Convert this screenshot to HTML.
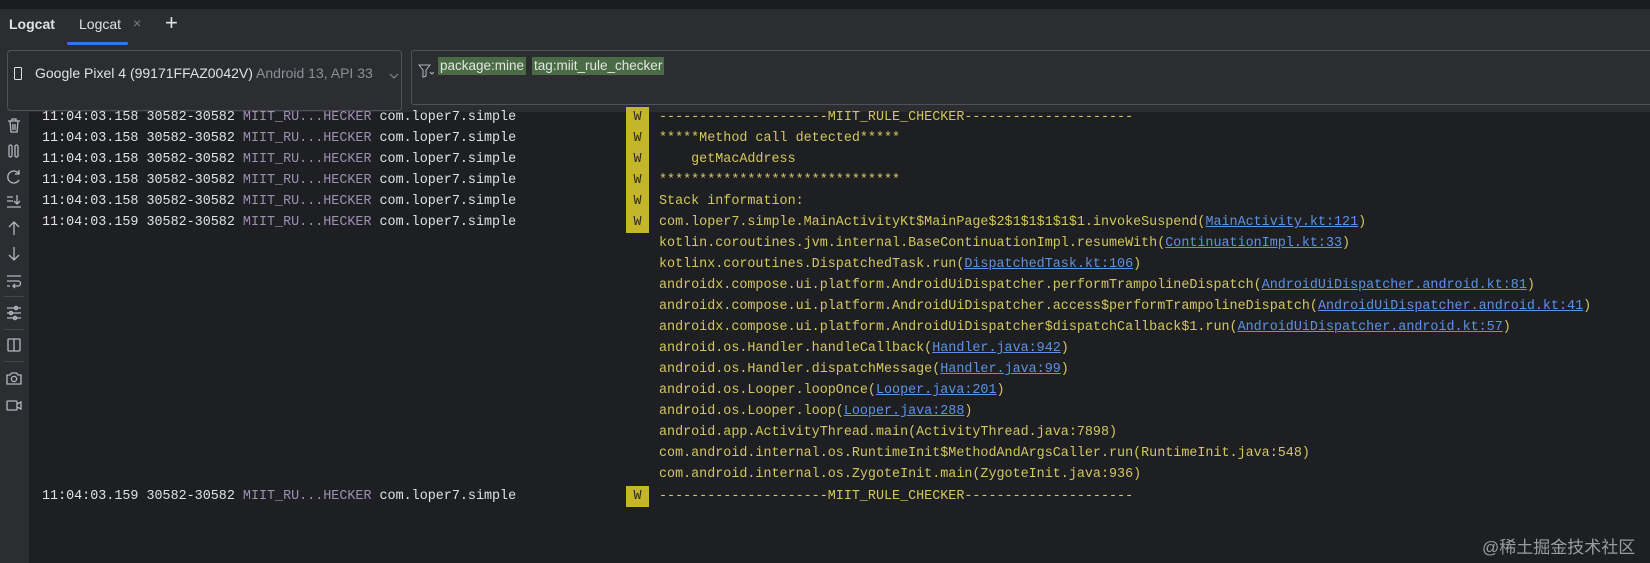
<!DOCTYPE html>
<html><head><meta charset="utf-8"><style>
body{margin:0;width:1650px;height:563px;background:#1e1f22;overflow:hidden;position:relative;font-family:"Liberation Sans",sans-serif}
.top{position:absolute;left:0;top:0;width:1650px;height:9px;background:#1a1b1d}
.tabbar{position:absolute;left:0;top:9px;width:1650px;height:37px;background:#2b2d30}
.t{position:absolute;color:#dfe1e5;font-size:14px}
.ul{position:absolute;left:67px;top:42px;width:61px;height:3px;background:#3574f0;border-radius:2px}
.band{position:absolute;left:0;top:46px;width:1650px;height:66px;background:#2b2d30}
.dev{position:absolute;left:7px;top:50px;width:395px;height:61px;border:1px solid #4e5157;border-radius:4px;box-sizing:border-box;background:#2b2d30}
.flt{position:absolute;left:411px;top:50px;width:1250px;height:55px;border:1px solid #4e5157;border-radius:3px;box-sizing:border-box;background:#2b2d30}
.chip{position:absolute;top:57px;height:18px;background:#4b6b47;color:#e2e6e0;font-size:13.5px;line-height:18px;padding:0 2px}
.side{position:absolute;left:0;top:112px;width:29px;height:451px;background:#2b2d30}
.log{position:absolute;left:0;top:2px;font-family:"Liberation Mono",monospace;font-size:13.4px;white-space:pre}
.r{position:absolute;height:21px;line-height:21px}
.a{color:#dfe1e5}.tg{color:#9d8fb0}
.m{color:#d2c75d}
.m a{color:#5c93e3;text-decoration:underline}
.w{position:absolute;left:626px;width:23px;background:#c4b62a}
.wl{position:absolute;left:626px;width:23px;text-align:center;color:#2b2b1a}
.ic{position:absolute;left:5px;stroke:#b4b8bf;fill:none;stroke-width:1.3}
.sep{position:absolute;left:4px;width:20px;height:1px;background:#43454a}
</style></head><body>
<div class="top"></div>
<div class="tabbar"></div>
<div class="t" style="left:9px;top:16px;font-weight:bold">Logcat</div>
<div class="t" style="left:79px;top:16px">Logcat</div>
<div class="t" style="left:133px;top:15px;color:#7a7e85">×</div>
<div class="t" style="left:165px;top:10px;font-size:22px;font-weight:300">+</div>
<div class="ul"></div>
<div class="band"></div>
<div class="dev">
<svg style="position:absolute;left:5px;top:15px" width="10" height="16"><rect x="1.5" y="1.5" width="7" height="12" rx="1" stroke="#dfe1e5" fill="none"/></svg>
<div class="t" style="left:27px;top:14px;font-size:14px">Google Pixel 4 (99171FFAZ0042V) <span style="color:#8c8f95">Android 13, API 33</span></div>
<svg style="position:absolute;left:381px;top:21px" width="10" height="8"><path d="M1 2l4 4 4-4" stroke="#8c8f95" fill="none"/></svg>
</div>
<div class="flt">
<svg style="position:absolute;left:6px;top:12px" width="16" height="16"><path d="M1 2h11l-4 5v6l-3 1V7z" stroke="#b4b8bf" fill="none"/><path d="M12 9l2 2 2-2" stroke="#b4b8bf" fill="none"/></svg>
</div>
<div class="chip" style="left:438px">package:mine</div>
<div class="chip" style="left:532px">tag:miit_rule_checker</div>
<div class="side"></div>
<svg class="ic" style="top:116px" width="18" height="18"><path d="M3 5h12M7 5V3h4v2M5 5l1 11h6l1-11M8 8v6M10 8v6"/></svg>
<svg class="ic" style="top:142px" width="18" height="18"><rect x="4" y="3" width="3" height="12" rx="1.5"/><rect x="10" y="3" width="3" height="12" rx="1.5"/></svg>
<svg class="ic" style="top:168px" width="18" height="18"><path d="M14 6A6 6 0 1 0 14 12M14 2v4h-4"/></svg>
<svg class="ic" style="top:192px" width="18" height="18"><path d="M2 5h6M2 9h6M2 15h14M12 3v9M9 9l3 3 3-3"/></svg>
<svg class="ic" style="top:219px" width="18" height="18"><path d="M9 16V3M4 8l5-5 5 5"/></svg>
<svg class="ic" style="top:245px" width="18" height="18"><path d="M9 2v13M4 10l5 5 5-5"/></svg>
<svg class="ic" style="top:272px" width="18" height="18"><path d="M2 4h14M2 9h11a2.5 2.5 0 0 1 0 5H8M10 12l-2 2 2 2M2 14h3"/></svg>
<div class="sep" style="top:296px"></div>
<svg class="ic" style="top:304px" width="18" height="18"><path d="M2 4h14M2 9h14M2 14h14"/><circle cx="11" cy="4" r="1.6"/><circle cx="6" cy="9" r="1.6"/><circle cx="10" cy="14" r="1.6"/></svg>
<div class="sep" style="top:329px"></div>
<svg class="ic" style="top:336px" width="18" height="18"><rect x="3" y="3" width="12" height="12" rx="1"/><path d="M9 3v12"/></svg>
<div class="sep" style="top:361px"></div>
<svg class="ic" style="top:369px" width="18" height="18"><path d="M2 6h3l1.5-2h5L13 6h3v9H2z"/><circle cx="9" cy="10" r="2.6"/></svg>
<svg class="ic" style="top:396px" width="18" height="18"><rect x="2" y="5" width="10" height="9" rx="1"/><path d="M12 8l4-2v7l-4-2"/></svg>

<div class="log">
<div class="w" style="top:105px;height:126px"></div>
<div class="w" style="top:484px;height:21px"></div>
<div class="r" style="top:105px;left:42px"><span class="a">11:04:03.158 30582-30582 </span><span class="tg">MIIT_RU...HECKER</span><span class="a"> com.loper7.simple</span></div>
<div class="r" style="top:126px;left:42px"><span class="a">11:04:03.158 30582-30582 </span><span class="tg">MIIT_RU...HECKER</span><span class="a"> com.loper7.simple</span></div>
<div class="r" style="top:147px;left:42px"><span class="a">11:04:03.158 30582-30582 </span><span class="tg">MIIT_RU...HECKER</span><span class="a"> com.loper7.simple</span></div>
<div class="r" style="top:168px;left:42px"><span class="a">11:04:03.158 30582-30582 </span><span class="tg">MIIT_RU...HECKER</span><span class="a"> com.loper7.simple</span></div>
<div class="r" style="top:189px;left:42px"><span class="a">11:04:03.158 30582-30582 </span><span class="tg">MIIT_RU...HECKER</span><span class="a"> com.loper7.simple</span></div>
<div class="r" style="top:210px;left:42px"><span class="a">11:04:03.159 30582-30582 </span><span class="tg">MIIT_RU...HECKER</span><span class="a"> com.loper7.simple</span></div>
<div class="r" style="top:484px;left:42px"><span class="a">11:04:03.159 30582-30582 </span><span class="tg">MIIT_RU...HECKER</span><span class="a"> com.loper7.simple</span></div>
<div class="r wl" style="top:105px">W</div><div class="r wl" style="top:126px">W</div><div class="r wl" style="top:147px">W</div><div class="r wl" style="top:168px">W</div><div class="r wl" style="top:189px">W</div><div class="r wl" style="top:210px">W</div><div class="r wl" style="top:484px">W</div>
<div class="m">
<div class="r" style="top:105px;left:659px">---------------------MIIT_RULE_CHECKER---------------------</div>
<div class="r" style="top:126px;left:659px">*****Method call detected*****</div>
<div class="r" style="top:147px;left:659px">    getMacAddress</div>
<div class="r" style="top:168px;left:659px">******************************</div>
<div class="r" style="top:189px;left:659px">Stack information:</div>
<div class="r" style="top:210px;left:659px">com.loper7.simple.MainActivityKt$MainPage$2$1$1$1$1$1.invokeSuspend(<a>MainActivity.kt:121</a>)</div>
<div class="r" style="top:231px;left:659px">kotlin.coroutines.jvm.internal.BaseContinuationImpl.resumeWith(<a>ContinuationImpl.kt:33</a>)</div>
<div class="r" style="top:252px;left:659px">kotlinx.coroutines.DispatchedTask.run(<a>DispatchedTask.kt:106</a>)</div>
<div class="r" style="top:273px;left:659px">androidx.compose.ui.platform.AndroidUiDispatcher.performTrampolineDispatch(<a>AndroidUiDispatcher.android.kt:81</a>)</div>
<div class="r" style="top:294px;left:659px">androidx.compose.ui.platform.AndroidUiDispatcher.access$performTrampolineDispatch(<a>AndroidUiDispatcher.android.kt:41</a>)</div>
<div class="r" style="top:315px;left:659px">androidx.compose.ui.platform.AndroidUiDispatcher$dispatchCallback$1.run(<a>AndroidUiDispatcher.android.kt:57</a>)</div>
<div class="r" style="top:336px;left:659px">android.os.Handler.handleCallback(<a>Handler.java:942</a>)</div>
<div class="r" style="top:357px;left:659px">android.os.Handler.dispatchMessage(<a>Handler.java:99</a>)</div>
<div class="r" style="top:378px;left:659px">android.os.Looper.loopOnce(<a>Looper.java:201</a>)</div>
<div class="r" style="top:399px;left:659px">android.os.Looper.loop(<a>Looper.java:288</a>)</div>
<div class="r" style="top:420px;left:659px">android.app.ActivityThread.main(ActivityThread.java:7898)</div>
<div class="r" style="top:441px;left:659px">com.android.internal.os.RuntimeInit$MethodAndArgsCaller.run(RuntimeInit.java:548)</div>
<div class="r" style="top:462px;left:659px">com.android.internal.os.ZygoteInit.main(ZygoteInit.java:936)</div>
<div class="r" style="top:484px;left:659px">---------------------MIIT_RULE_CHECKER---------------------</div>
</div></div>
<div style="position:absolute;left:1482px;top:533px;color:#9a9ca0;font-size:17px;font-family:'Liberation Sans','Noto Sans CJK SC',sans-serif">@稀土掘金技术社区</div>
</body></html>
